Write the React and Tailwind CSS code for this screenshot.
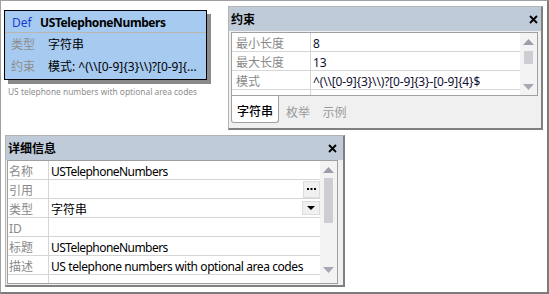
import React from 'react';

const FONT = "font-['Noto_Sans','Noto_Sans_CJK_SC',sans-serif]";

const CloseIcon = () => (
  <svg width="9" height="9" viewBox="0 0 9 9" className="shrink-0">
    <path d="M1 1L8 8M8 1L1 8" stroke="#000" strokeWidth="1.8" />
  </svg>
);

const Arrow = ({ down, color }) => (
  <svg width="11" height="6" viewBox="0 0 11 6">
    <path d={down ? 'M0 0H11L5.5 6Z' : 'M0 6H11L5.5 0Z'} fill={color} />
  </svg>
);

// vertical scroll bar, thumb height given as a class
const Scrollbar = ({ thumb, bottomPad = '' }) => (
  <div className={`w-[17px] shrink-0 flex flex-col items-center bg-[#f3f3f3] ${bottomPad}`}>
    <div className="h-[17px] flex items-center justify-center">
      <Arrow color="#9c9caa" />
    </div>
    <div className={`w-[9px] bg-[#cdcdd3] ${thumb}`} />
    <div className="flex-1" />
    <div className="h-[17px] flex items-center justify-center">
      <Arrow down color="#a8a8b4" />
    </div>
  </div>
);

const PanelHeader = ({ title, pr }) => (
  <div className={`h-[24px] shrink-0 bg-[#bfcbd9] flex items-center justify-between pl-[2px] ${pr}`}>
    <span className="text-[12px] font-bold text-black leading-none pt-[2px]">{title}</span>
    <CloseIcon />
  </div>
);

const constraintRows = [
  { label: '最小长度', value: '8' },
  { label: '最大长度', value: '13' },
  { label: '模式', value: '^(\\\\[0-9]{3}\\\\)?[0-9]{3}-[0-9]{4}$' },
];

const detailRows = [
  { label: '名称', value: 'USTelephoneNumbers', tight: 'tracking-[-0.55px]' },
  { label: '引用', value: '', button: 'dots' },
  { label: '类型', value: '字符串', button: 'drop' },
  { label: 'ID', value: '' },
  { label: '标题', value: 'USTelephoneNumbers', tight: 'tracking-[-0.55px]' },
  { label: '描述', value: 'US telephone numbers with optional area codes', tight: 'tracking-[-0.42px]' },
];

const DefNode = () => (
  <>
    <div className="absolute left-[3px] top-[9px] w-[203px] h-[70px] border border-black bg-[#a6caf0] shadow-[4px_4px_0_#8a8a8a] flex flex-col text-[12px] leading-none">
      <div className="h-[22px] shrink-0 flex items-center pl-[7px] border-b border-[#bcb6ab]">
        <span className="w-[28px] text-[#1a3fd0] pt-[2px]">Def</span>
        <span className="font-bold text-black tracking-[-0.4px] pt-[2px]">USTelephoneNumbers</span>
      </div>
      <div className="h-[23px] shrink-0 flex items-center pl-[6px]">
        <span className="w-[37px] text-[#8e8e8e]">类型</span>
        <span className="text-black">字符串</span>
      </div>
      <div className="h-[22px] shrink-0 flex items-center pl-[6px]">
        <span className="w-[37px] text-[#8e8e8e]">约束</span>
        <span className="text-black whitespace-nowrap">模式: ^(\\[0-9]{'{3}'}\\)?[0-9]{'{...'}</span>
      </div>
    </div>
    <div className="absolute left-[7px] top-[85px] text-[8.4px] leading-[12px] text-[#8e8e8e] whitespace-nowrap">
      US telephone numbers with optional area codes
    </div>
  </>
);

const ConstraintPanel = () => (
  <div className="absolute left-[227px] top-[5px] w-[315px] h-[124px] flex flex-col bg-[#f0f0f0] border-t border-l border-t-[#b4b4b4] border-l-[#b4b4b4] border-r-2 border-b-2 border-r-[#808080] border-b-[#808080]">
    <PanelHeader title="约束" pr="pr-[3px]" />
    <div className="mt-[1px] ml-[2px] w-[307px] h-[64px] shrink-0 flex bg-white border border-[#a0a0a0] overflow-hidden">
      <div className="flex-1 flex flex-col">
        {constraintRows.map((r) => (
          <div key={r.label} className="h-[19px] shrink-0 flex border-b border-[#d6d6d6] text-[12px] leading-none">
            <div className="w-[79px] shrink-0 flex items-center pl-[4px] text-[#8a8a8a] border-r border-[#d6d6d6]">
              <span className="pt-[4px]">{r.label}</span>
            </div>
            <div className="flex-1 flex items-center pl-[2px] text-[#101030] whitespace-nowrap tracking-[-0.15px]">
              <span className="pt-[4px]">{r.value}</span>
            </div>
          </div>
        ))}
        <div className="flex-1 flex">
          <div className="w-[79px] shrink-0 border-r border-[#d6d6d6]" />
        </div>
      </div>
      <Scrollbar thumb="h-[13px] mt-[1px]" />
    </div>
    <div className="h-[28px] shrink-0 flex pl-[2px] text-[12px] leading-none">
      <div className="w-[48px] h-[27px] flex items-center justify-center pt-[5px] bg-white border border-t-0 border-[#a0a0a0] rounded-b-[3px] text-black font-medium">字符串</div>
      <div className="w-[38px] flex items-center justify-center pt-[5px] text-[#9a9a9a]">枚举</div>
      <div className="w-[35px] flex items-center justify-center pt-[5px] text-[#9a9a9a]">示例</div>
    </div>
  </div>
);

const DotsButton = () => (
  <div className="w-[17px] h-[17px] shrink-0 bg-[#f0f0f0] border border-[#dcdcdc] flex items-center justify-center">
    <svg width="9" height="2" viewBox="0 0 9 2">
      <rect x="0" y="0" width="2" height="2" fill="#000" />
      <rect x="3.5" y="0" width="2" height="2" fill="#000" />
      <rect x="7" y="0" width="2" height="2" fill="#000" />
    </svg>
  </div>
);

const DropButton = () => (
  <div className="w-[18px] h-[14px] shrink-0 bg-[#f0f0f0] border border-[#dcdcdc] flex items-center justify-center">
    <svg width="8" height="4" viewBox="0 0 8 4">
      <path d="M0 0H8L4 4Z" fill="#000" />
    </svg>
  </div>
);

const DetailPanel = () => (
  <div className="absolute left-[4px] top-[134px] w-[340px] h-[152px] flex flex-col bg-[#f0f0f0] border-t border-l border-t-[#b4b4b4] border-l-[#b4b4b4] border-r-2 border-b-2 border-r-[#808080] border-b-[#808080]">
    <PanelHeader title="详细信息" pr="pr-[6px]" />
    <div className="ml-[1px] w-[331px] h-[124px] shrink-0 flex bg-white border border-[#a0a0a0] overflow-hidden">
      <div className="flex-1 flex flex-col">
        {detailRows.map((r) => (
          <div key={r.label} className="h-[19px] shrink-0 flex border-b border-[#d6d6d6] text-[12px] leading-none">
            <div className="w-[41px] shrink-0 flex items-center pl-[1px] text-[#8a8a8a] border-r border-[#d6d6d6]">
              <span className="pt-[4px]">{r.label}</span>
            </div>
            <div className="flex-1 flex items-center justify-between pl-[2px] text-black whitespace-nowrap">
              <span className={`pt-[4px] ${r.tight || ''}`}>{r.value}</span>
              {r.button === 'dots' && <DotsButton />}
              {r.button === 'drop' && <DropButton />}
            </div>
          </div>
        ))}
        <div className="flex-1 flex">
          <div className="w-[41px] shrink-0 border-r border-[#d6d6d6]" />
        </div>
      </div>
      <Scrollbar thumb="h-[45px]" bottomPad="pb-[5px]" />
    </div>
  </div>
);

export default function App() {
  return (
    <div className={`relative w-[549px] h-[294px] overflow-hidden bg-white border-t border-l border-t-[#a0a0a0] border-l-[#a0a0a0] border-r-2 border-b-2 border-r-[#7c7c7c] border-b-[#7c7c7c] ${FONT}`}>
      <DefNode />
      <ConstraintPanel />
      <DetailPanel />
    </div>
  );
}
